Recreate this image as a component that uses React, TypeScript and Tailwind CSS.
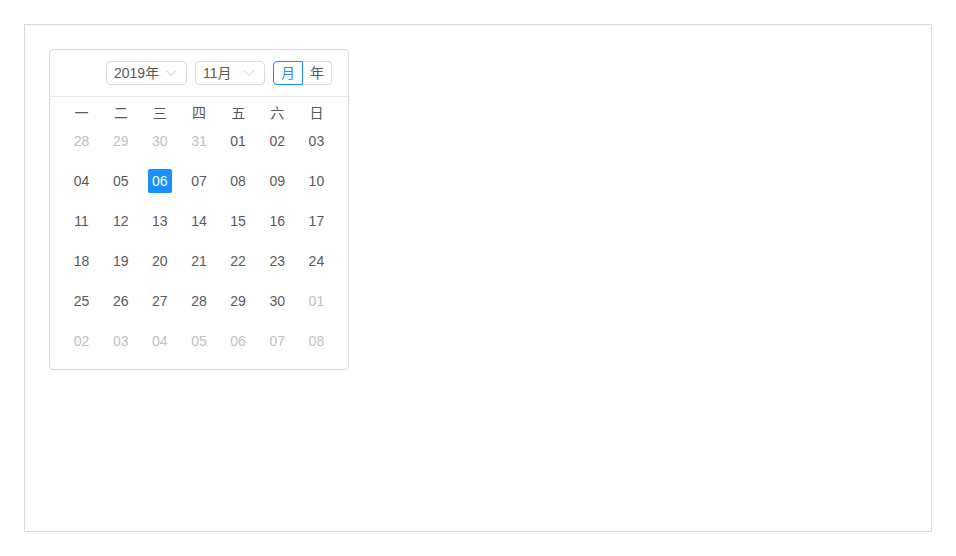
import { ChevronDown } from 'lucide-react';

const weekDays = ['一', '二', '三', '四', '五', '六', '日'];

type Day = { label: string; muted?: boolean; selected?: boolean };

function buildDays(): Day[] {
  const days: Day[] = [];
  [28, 29, 30, 31].forEach(d => days.push({ label: String(d), muted: true }));
  for (let d = 1; d <= 30; d++) {
    days.push({ label: String(d).padStart(2, '0'), selected: d === 6 });
  }
  for (let d = 1; d <= 8; d++) {
    days.push({ label: String(d).padStart(2, '0'), muted: true });
  }
  return days;
}

function Select({ value, width }: { value: string; width: string }) {
  return (
    <div
      className={`${width} h-6 flex items-center justify-between rounded-[4px] border border-[#d9d9d9] bg-white pl-[7px] pr-[5px] text-[14px] text-[#595959]`}
    >
      <span>{value}</span>
      <ChevronDown size={20} strokeWidth={1} className="text-[#bfbfbf]" />
    </div>
  );
}

export default function App() {
  const days = buildDays();

  return (
    <div
      className="min-h-screen bg-white p-6"
      style={{ fontFamily: '"Liberation Sans", "Noto Sans CJK SC", sans-serif' }}
    >
      <div className="h-[508px] border border-[#d9d9d9] p-6">
        <div className="w-[300px] rounded-[4px] border border-[#d9d9d9] bg-white">
          <div className="flex items-center justify-end gap-2 border-b border-[#e8e8e8] py-[11px] pr-4">
            <Select value="2019年" width="w-[81px]" />
            <Select value="11月" width="w-[70px]" />
            <div className="flex h-6 text-[14px]">
              <div className="flex w-[30px] items-center justify-center rounded-l-[4px] border border-[#1890ff] text-[#1890ff]">
                月
              </div>
              <div className="flex w-[29px] items-center justify-center rounded-r-[4px] border border-l-0 border-[#d9d9d9] text-[#595959]">
                年
              </div>
            </div>
          </div>

          <div className="px-3 py-2">
            <div className="grid h-4 grid-cols-7 text-[14px] text-[#595959]">
              {weekDays.map(w => (
                <div key={w} className="flex items-start justify-center leading-[16px]">
                  {w}
                </div>
              ))}
            </div>
            <div className="grid grid-cols-7 auto-rows-[40px] text-[14px]">
              {days.map((d, i) => (
                <div key={i} className="flex items-center justify-center">
                  <span
                    className={
                      d.selected
                        ? 'flex h-6 w-6 items-center justify-center rounded-[2px] bg-[#1890ff] pt-px text-white'
                        : d.muted
                        ? 'flex h-6 w-6 items-center justify-center pt-px text-[#bfbfbf]'
                        : 'flex h-6 w-6 items-center justify-center pt-px text-[#595959]'
                    }
                  >
                    {d.label}
                  </span>
                </div>
              ))}
            </div>
          </div>
        </div>
      </div>
    </div>
  );
}
